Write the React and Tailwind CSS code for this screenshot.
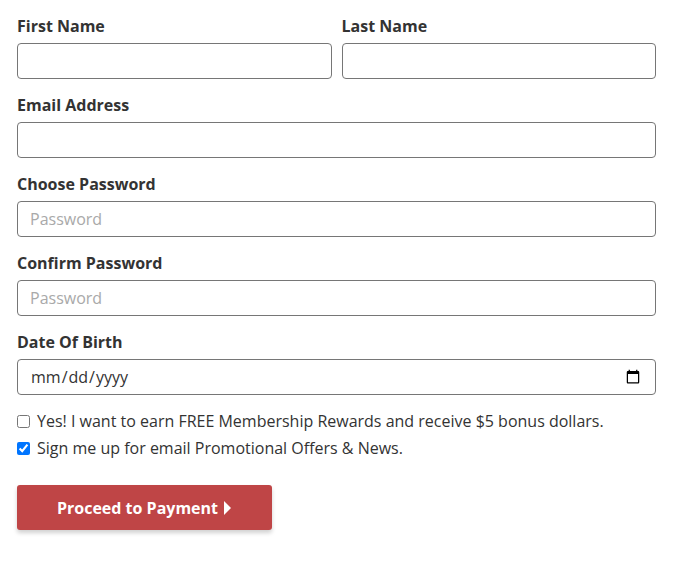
import { useState } from 'react';

const Field = ({ label, type = 'text', placeholder, className = '' }) => (
  <div className={`flex flex-col ${className}`}>
    <label className="font-bold text-[16px] leading-6 text-[#333] mb-[5px]">{label}</label>
    <input
      type={type}
      placeholder={placeholder}
      className="h-9 w-full rounded-[4px] border border-[#767676] bg-white px-3 text-[16px] text-[#333] placeholder:text-[#a9a9a9] outline-none"
    />
  </div>
);

export default function App() {
  const [rewards, setRewards] = useState(false);
  const [promo, setPromo] = useState(true);

  return (
    <div className="bg-white pl-[17px] pr-[18px] pt-[14px] pb-8 font-['Open_Sans',sans-serif] text-[#333]">
      <div className="grid grid-cols-2 gap-[10px]">
        <Field label="First Name" />
        <Field label="Last Name" />
      </div>
      <Field label="Email Address" type="email" className="mt-[14px]" />
      <Field label="Choose Password" type="password" placeholder="Password" className="mt-[14px]" />
      <Field label="Confirm Password" type="password" placeholder="Password" className="mt-[14px]" />
      <Field label="Date Of Birth" type="date" className="mt-[14px]" />

      <div className="mt-[14px] flex flex-col gap-[3px]">
        <label className="flex items-center gap-[7px] text-[16px] leading-6">
          <input type="checkbox" checked={rewards} onChange={(e) => setRewards(e.target.checked)} className="m-0 h-[13px] w-[13px]" />
          Yes! I want to earn FREE Membership Rewards and receive $5 bonus dollars.
        </label>
        <label className="flex items-center gap-[7px] text-[16px] leading-6">
          <input type="checkbox" checked={promo} onChange={(e) => setPromo(e.target.checked)} className="m-0 h-[13px] w-[13px]" />
          Sign me up for email Promotional Offers &amp; News.
        </label>
      </div>

      <button className="mt-[25px] flex h-[45px] w-[255px] items-center justify-center gap-[5px] rounded-[3px] bg-[#bf4546] text-[16px] font-bold text-white shadow-[0_3px_4px_rgba(0,0,0,0.18)]">
        Proceed to Payment
        <svg width="9" height="16" viewBox="0 0 9 16" fill="white"><path d="M1 1l7 7-7 7z" /></svg>
      </button>
    </div>
  );
}
